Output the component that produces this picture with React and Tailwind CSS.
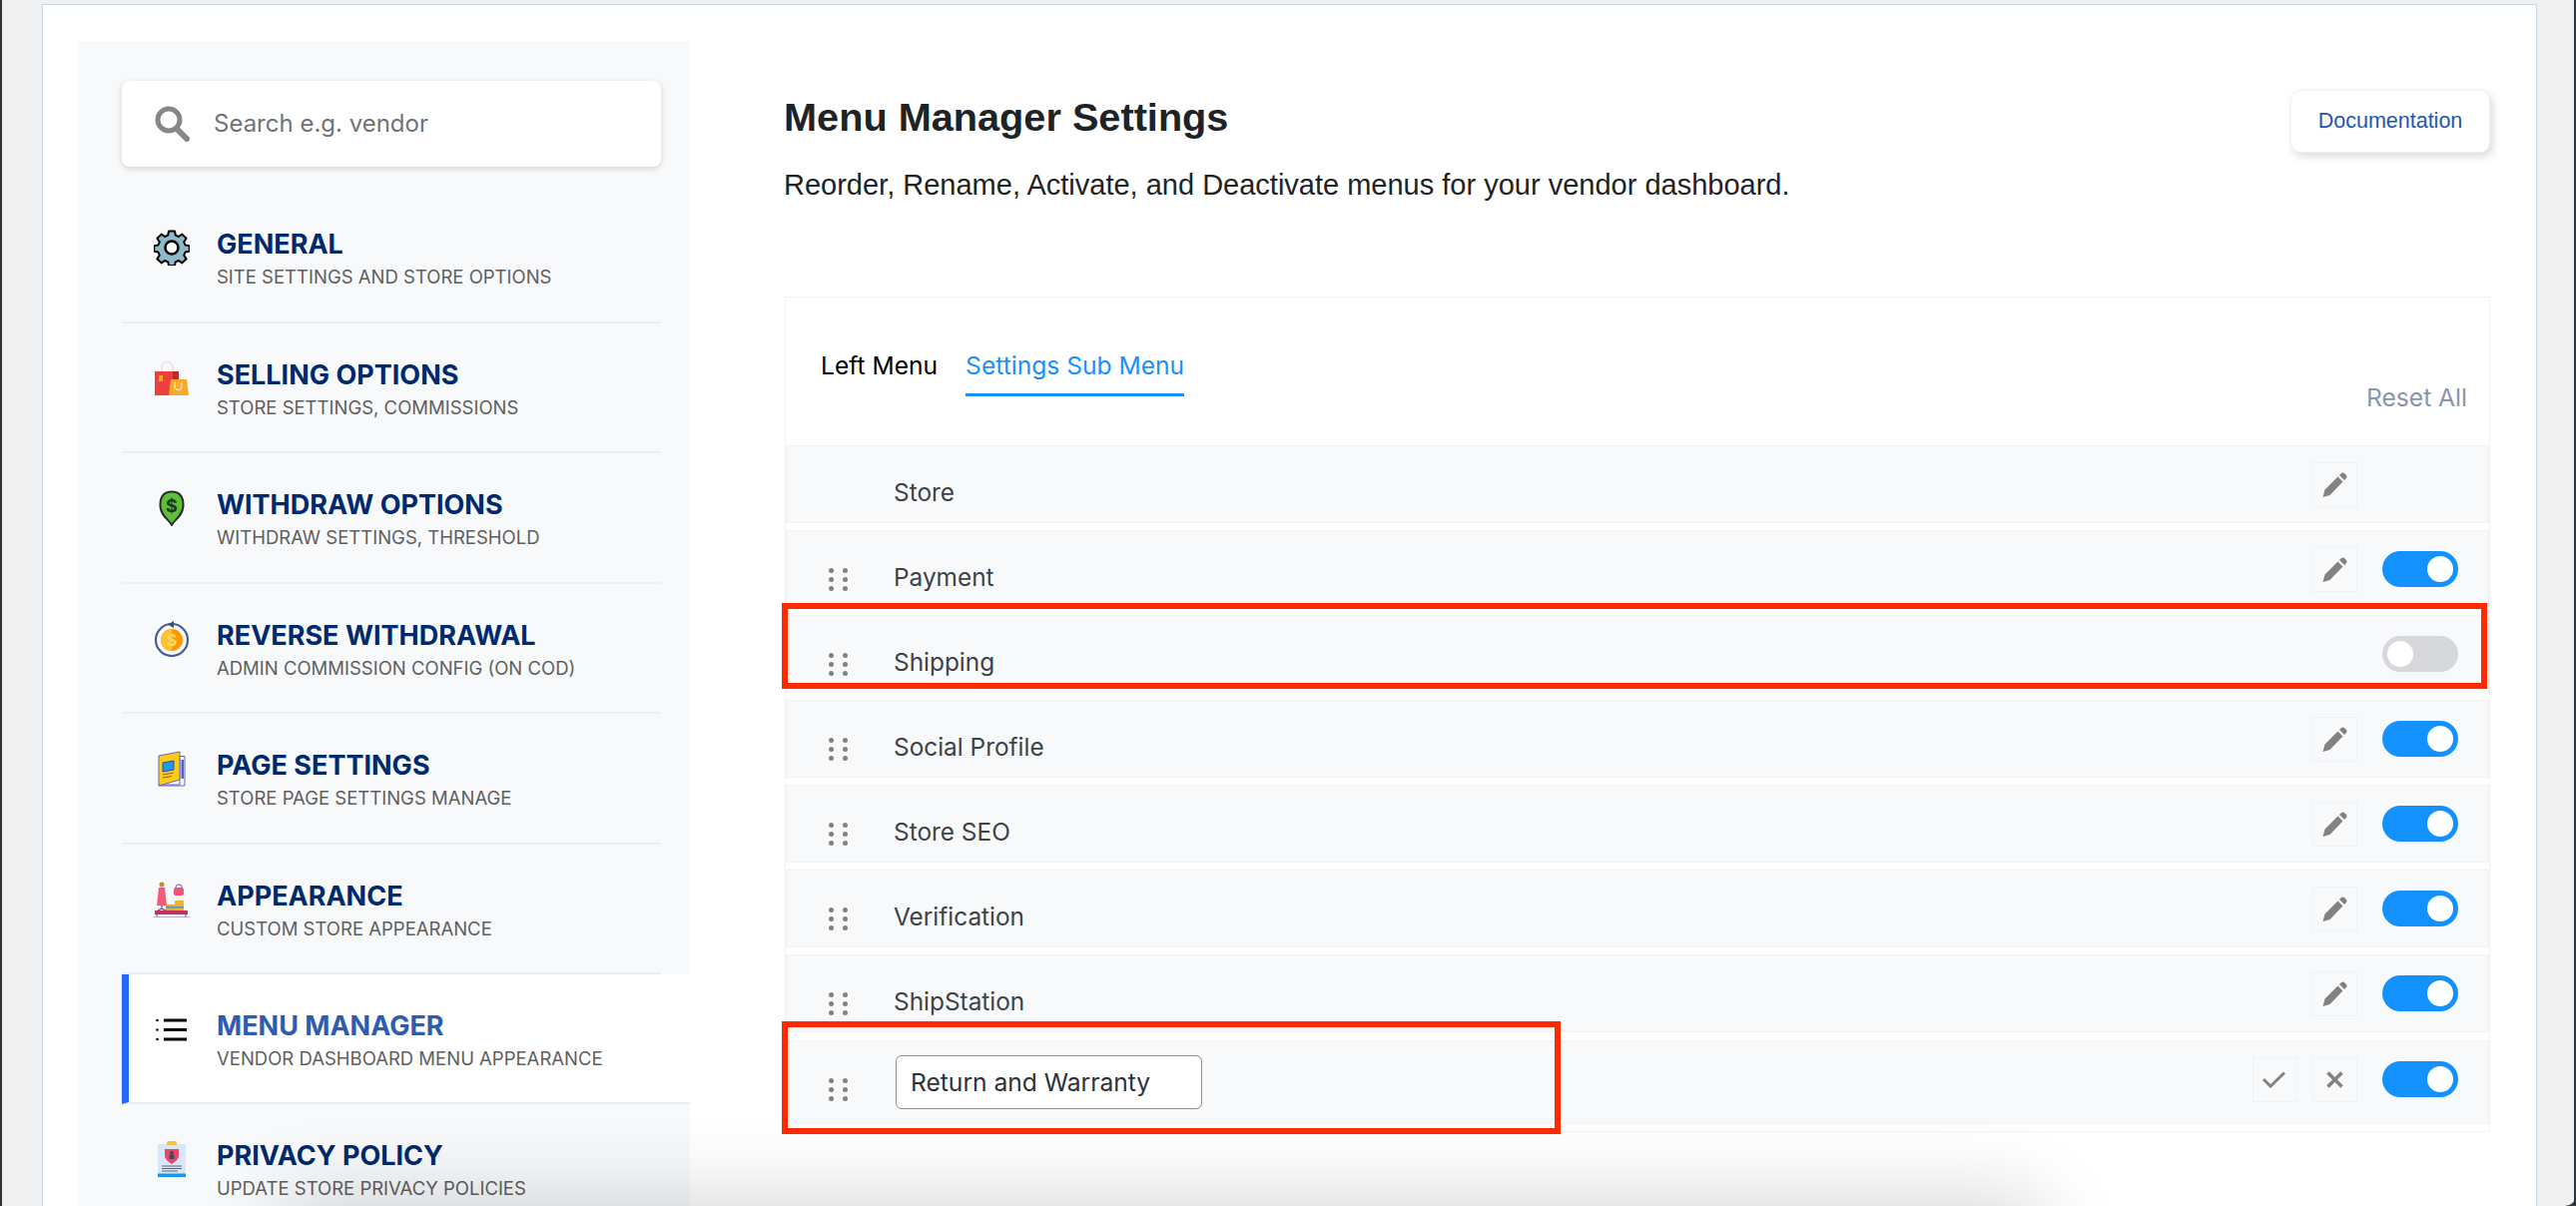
// ==========================================
// Sidebar icons
// ==========================================
const GearIcon = () => (
  <svg width="36" height="36" viewBox="0 0 36 36">
    <path
      d="M15 1.500h6l.8 4.200 3 1.300 3.600-2.400 4.200 4.200-2.400 3.600 1.300 3 4.200.8v5.600l-4.200.8-1.300 3 2.400 3.600-4.200 4.200-3.600-2.400-3 1.300-.8 3.600h-6l-.8-3.600-3-1.300-3.600 2.400-4.200-4.200 2.400-3.600-1.300-3-4.200-.8v-5.600l4.200-.8 1.300-3-2.400-3.600 4.200-4.200 3.600 2.400 3-1.300z"
      fill="#8fb8c8"
      stroke="#000"
      strokeWidth="2"
      strokeLinejoin="round"
    />
    <circle cx="18" cy="18" r="6.500" fill="#fff" stroke="#000" strokeWidth="2.500" />
  </svg>
);

const BagsIcon = () => (
  <svg width="36" height="36" viewBox="0 0 36 36">
    <path d="M8 14V7a5.500 5.500 0 0 1 11 0v7" fill="none" stroke="#e4e4e8" strokeWidth="1.500" />
    <rect x="1" y="11" width="24" height="24" fill="#ee3e3e" />
    <rect x="19" y="11" width="6" height="8" fill="#b92c2c" />
    <rect x="5" y="15" width="4" height="6" fill="#f3a626" />
    <path d="M17 19h16l2 16H15z" fill="#f7ab2b" />
    <path d="M21 22v4a3.500 3.500 0 0 0 7 0v-4" fill="none" stroke="#fbe3b4" strokeWidth="1.400" />
  </svg>
);

const CoinPinIcon = () => (
  <svg width="36" height="36" viewBox="0 0 36 36">
    <path
      d="M18 35c-2-5-11.500-9-11.500-20C6.500 6 11 1.500 18 1.500S29.500 6 29.500 15C29.500 26 20 30 18 35z"
      fill="#5cbf35"
      stroke="#2b2b2b"
      strokeWidth="2"
    />
    <text x="18" y="22" textAnchor="middle" fontSize="18" fontWeight="700" fill="#20331a" fontFamily="Inter, sans-serif">$</text>
  </svg>
);

const ReverseIcon = () => (
  <svg width="36" height="36" viewBox="0 0 36 36">
    <circle cx="18" cy="19" r="16" fill="none" stroke="#4b5c8f" strokeWidth="2.200" />
    <path d="M20 0v7l-6-3.500z" fill="#3d4d80" />
    <circle cx="18" cy="19" r="11" fill="#ff9800" />
    <path d="M18 8a11 11 0 0 0 0 22z" fill="#ffc02e" />
    <text x="18" y="25" textAnchor="middle" fontSize="16" fontWeight="700" fill="#ffd76a" fontFamily="Inter, sans-serif">$</text>
  </svg>
);

const PageIcon = () => (
  <svg width="36" height="36" viewBox="0 0 36 36">
    <path d="M26 5.500h5V35H5v-1h21z" fill="#fff" stroke="#5a63c8" strokeWidth="1" />
    <rect x="27.500" y="9" width="2.500" height="19" fill="#4a63d0" />
    <path d="M5 5L26 1v28L5 35z" fill="#ffcb14" stroke="#6a6ab0" strokeWidth="1" />
    <path d="M9 12l11-2v9l-11 2z" fill="#1a9cf0" stroke="#2a4ab0" strokeWidth="1" />
    <path d="M9 24l11-2M9 27l9-1.600" stroke="#7a6a40" strokeWidth="1" />
  </svg>
);

const AppearanceIcon = () => (
  <svg width="36" height="36" viewBox="0 0 36 36">
    <circle cx="8" cy="3" r="2.500" fill="#c98a3a" />
    <path d="M5 6h6l1 9 1 9H3l1-9z" fill="#f2597a" />
    <path d="M8 24v4M4 29l4-2 4 2" stroke="#5a4a8a" strokeWidth="1.200" fill="none" />
    <path d="M22 6a3 3 0 0 1 6 0" fill="none" stroke="#8a6a90" strokeWidth="1.200" />
    <rect x="20" y="6" width="10" height="8" rx="2" fill="#ec5578" />
    <rect x="12" y="23" width="9" height="6" fill="#e8a93a" />
    <rect x="21" y="19" width="9" height="10" fill="#f0b32e" />
    <rect x="12" y="25" width="18" height="1.500" fill="#4aa0a8" />
    <rect x="1" y="29" width="33" height="4" fill="#c2315f" />
    <path d="M3 33v2M32 33v2" stroke="#a05a90" strokeWidth="1.200" />
    <rect x="0" y="35" width="36" height="1" fill="#b7a6d2" />
  </svg>
);

const ListIcon = () => (
  <svg width="36" height="36" viewBox="0 0 36 36">
    <path d="M10 9h23M10 18.500h23M10 28h23" stroke="#000" strokeWidth="2.800" />
    <circle cx="3.500" cy="9" r="1.300" fill="#000" />
    <circle cx="3.500" cy="18.500" r="1.300" fill="#000" />
    <circle cx="3.500" cy="28" r="1.300" fill="#000" />
  </svg>
);

const PrivacyIcon = () => (
  <svg width="36" height="36" viewBox="0 0 36 36">
    <rect x="4" y="3" width="28" height="33" fill="#d9e6f5" />
    <rect x="4" y="32.500" width="28" height="3.500" fill="#1997ef" />
    <rect x="13" y="0" width="10" height="4" rx="1.500" fill="#f5c33b" />
    <path d="M11 8h14v7c0 3-4 6-7 8-3-2-7-5-7-8z" fill="#ef4468" />
    <circle cx="18" cy="12" r="2" fill="#3a4a6a" />
    <rect x="15.500" y="14" width="5" height="4" rx="1" fill="#3a4a6a" />
    <path d="M8 25h20M8 27.500h20M8 30h16" stroke="#5a6470" strokeWidth="1" />
  </svg>
);

const SearchIcon = () => (
  <svg width="36" height="36" viewBox="0 0 36 36">
    <circle cx="15" cy="14" r="11" fill="none" stroke="#85878a" strokeWidth="5" />
    <path d="M23 23l10 10" stroke="#85878a" strokeWidth="6" strokeLinecap="round" />
  </svg>
);

// ==========================================
// Row action icons
// ==========================================
const PencilIcon = () => (
  <svg width="25" height="25" viewBox="0 0 25 25" fill="#828282">
    <path d="M0.500 25L2.500 17.500 15.500 4.500 20.500 9.500 7.500 23z" />
    <path d="M17 3l1.500-1.500a2.800 2.800 0 0 1 4 0l1 1a2.800 2.800 0 0 1 0 4L22 8z" />
  </svg>
);

const CheckIcon = () => (
  <svg className="mr-[3px]" width="23" height="17" viewBox="0 0 23 17" fill="none" stroke="#828282" strokeWidth="3">
    <path d="M1 8l7 7L22 1.500" />
  </svg>
);

const CloseIcon = () => (
  <svg width="17" height="17" viewBox="0 0 17 17" fill="none" stroke="#828282" strokeWidth="3.500">
    <path d="M1.500 1.500l14 14M15.500 1.500l-14 14" />
  </svg>
);

const navItems = [
  { title: 'GENERAL', sub: 'SITE SETTINGS AND STORE OPTIONS', icon: GearIcon },
  { title: 'SELLING OPTIONS', sub: 'STORE SETTINGS, COMMISSIONS', icon: BagsIcon },
  { title: 'WITHDRAW OPTIONS', sub: 'WITHDRAW SETTINGS, THRESHOLD', icon: CoinPinIcon },
  { title: 'REVERSE WITHDRAWAL', sub: 'ADMIN COMMISSION CONFIG (ON COD)', icon: ReverseIcon },
  { title: 'PAGE SETTINGS', sub: 'STORE PAGE SETTINGS MANAGE', icon: PageIcon },
  { title: 'APPEARANCE', sub: 'CUSTOM STORE APPEARANCE', icon: AppearanceIcon },
  { title: 'MENU MANAGER', sub: 'VENDOR DASHBOARD MENU APPEARANCE', icon: ListIcon, active: true },
  { title: 'PRIVACY POLICY', sub: 'UPDATE STORE PRIVACY POLICIES', icon: PrivacyIcon },
];

const rows = [
  { name: 'Store', fixed: true, edit: true },
  { name: 'Payment', edit: true, on: true },
  { name: 'Shipping', on: false },
  { name: 'Social Profile', edit: true, on: true },
  { name: 'Store SEO', edit: true, on: true },
  { name: 'Verification', edit: true, on: true },
  { name: 'ShipStation', edit: true, on: true },
];

// ==========================================
// Small parts
// ==========================================
const Grip = () => (
  <div className="grid w-[19px] grid-cols-2 gap-x-[9px] gap-y-[4px]">
    {[0, 1, 2, 3, 4, 5].map((i) => (
      <span key={i} className="h-[5px] w-[5px] rounded-full bg-[#828282]" />
    ))}
  </div>
);

const Toggle = ({ on }) => (
  <div className={`flex h-[36px] w-[76px] items-center rounded-full px-[5px] ${on ? 'justify-end bg-[#1291ff]' : 'justify-start bg-[#d6d8db]'}`}>
    <span className="h-[26px] w-[26px] rounded-full bg-white" />
  </div>
);

const IconBox = ({ children }) => (
  <div className="flex h-[45px] w-[45px] items-center justify-center border border-[#f0f1f3]">
    {children}
  </div>
);

const NavItem = ({ item }) => {
  const Icon = item.icon;
  if (item.active) {
    return (
      <div className="flex h-[130px] w-[569px] gap-[27px] border-b-2 border-l-[7px] border-b-[#eceef0] border-l-[#2468f5] bg-white pl-[25px] pt-[35px]">
        <div className="mt-[2px]"><Icon /></div>
        <div>
          <div className="text-[27px] leading-[34px] font-bold text-[#2d5cb0]">{item.title}</div>
          <div className="mt-[3px] text-[18.5px] leading-[24px] text-[#5f5f5f]">{item.sub}</div>
        </div>
      </div>
    );
  }
  return (
    <div className="flex h-[130.5px] w-[540px] gap-[27px] border-b-2 border-[#eceef0] pl-[32px] pt-[35px]">
      <div className="mt-[2px]"><Icon /></div>
      <div>
        <div className="text-[27px] leading-[34px] font-bold text-[#002a6e]">{item.title}</div>
        <div className="mt-[3px] text-[18.5px] leading-[24px] text-[#5f5f5f]">{item.sub}</div>
      </div>
    </div>
  );
};

const MenuRow = ({ row }) => (
  <div className="flex h-[78px] items-center border border-[#f1f2f4] bg-[#f8f9fb] pl-[42px] pr-[30px]">
    <div className="mt-[20px] w-[65px]">{!row.fixed && <Grip />}</div>
    <div className="mt-[16px] flex-1 text-[24.4px] leading-[30px] text-[#3c434a]">{row.name}</div>
    <div className="flex items-center gap-[25px]">
      <div className="w-[45px]">
        {row.edit && <IconBox><PencilIcon /></IconBox>}
      </div>
      <div className="w-[76px]">{!row.fixed && <Toggle on={row.on} />}</div>
    </div>
  </div>
);

// ==========================================
// Page
// ==========================================
export default function App() {
  return (
    <div className="relative h-[1208px] w-[2580px] overflow-hidden border-x-2 border-[#2c3338] bg-[#f0f0f1] pl-[40px] pr-[37px] pt-[4px] font-['Inter',sans-serif]">
      {/* admin menu slivers on the far left */}
      <div className="absolute left-[-2px] top-[204px] h-[18px] w-[2px] bg-[#2271b1]" />
      <div className="absolute left-[-2px] top-[247px] h-[18px] w-[2px] bg-[#2271b1]" />

      <div className="flex h-[1300px] gap-[95px] border border-[#c8d7e1] bg-white pl-[36px] pr-[46px] pt-[36px]">
        {/* Sidebar */}
        <aside className="w-[612px] shrink-0 bg-[#f8f9fb] pl-[43px] pt-[40px]">
          <div className="flex h-[86px] w-[540px] items-center gap-[24px] rounded-[8px] bg-white pl-[32px] shadow-[0_2px_6px_rgba(0,0,0,0.16)]">
            <SearchIcon />
            <span className="text-[24px] text-[#6f7479]">Search e.g. vendor</span>
          </div>
          <div className="mt-[26px]">
            {navItems.map((item) => (
              <NavItem key={item.title} item={item} />
            ))}
          </div>
        </aside>

        {/* Main */}
        <main className="flex-1">
          <div className="flex items-start justify-between">
            <div className="-ml-[1px] pt-[52px] font-['Liberation_Sans',sans-serif] text-[#1d2327]">
              <h1 className="text-[39.7px] leading-[48px] font-bold">Menu Manager Settings</h1>
              <p className="mt-[27px] text-[29px] leading-[35px]">
                Reorder, Rename, Activate, and Deactivate menus for your vendor dashboard.
              </p>
            </div>
            <button className="mt-[49px] h-[63px] w-[200px] rounded-[10px] border border-[#f0f0f1] bg-white font-['Liberation_Sans',sans-serif] text-[21.5px] text-[#2456b4] shadow-[3px_4px_8px_rgba(0,0,0,0.14)]">
              Documentation
            </button>
          </div>

          <section className="mt-[94px] h-[837px] border border-[#f1f2f4]">
            <div className="relative flex h-[148px] gap-[28px] pl-[35px]">
              <div className="pt-[52px] text-[24.6px] leading-[32px] text-black">Left Menu</div>
              <div className="h-[99px] border-b-[3px] border-[#1890ff] pt-[52px] text-[24.6px] leading-[32px] text-[#1890ff]">Settings Sub Menu</div>
              <div className="absolute right-[22px] top-[84px] text-[24.6px] leading-[32px] text-[#8b94ad]">Reset All</div>
            </div>
            <div className="flex flex-col gap-[7px]">
              {rows.map((row) => (
                <MenuRow key={row.name} row={row} />
              ))}
              <div className="mt-[1px] flex h-[84px] items-center border border-[#f1f2f4] bg-[#f8f9fb] pl-[42px] pr-[30px]">
                <div className="mt-[14px] w-[67px]"><Grip /></div>
                <div className="flex-1">
                  <div className="flex h-[54px] w-[307px] items-center rounded-[6px] border border-[#8c8f94] bg-white pl-[14px] text-[24.6px] text-[#2c3338]">
                    Return and Warranty
                  </div>
                </div>
                <div className="mb-[6px] flex items-center gap-[15px]">
                  <IconBox><CheckIcon /></IconBox>
                  <div className="flex items-center gap-[25px]">
                    <IconBox><CloseIcon /></IconBox>
                    <Toggle on />
                  </div>
                </div>
              </div>
            </div>
          </section>
        </main>
      </div>

      {/* Annotation boxes drawn over the screenshot */}
      <div className="pointer-events-none absolute left-[781px] top-[604px] h-[86px] w-[1708px] border-[6px] border-[#ff2a00]" />
      <div className="pointer-events-none absolute left-[781px] top-[1023px] h-[113px] w-[780px] border-[6px] border-[#ff2a00]" />

      {/* soft shadow rising from the bottom edge */}
      <div className="pointer-events-none absolute left-[320px] top-[1245px] h-[30px] w-[1680px] rounded-full shadow-[0_0_80px_50px_rgba(0,0,0,0.15)]" />

      {/* rounded window corner */}
      <div className="absolute bottom-0 right-[-2px] h-[10px] w-[10px] bg-[radial-gradient(circle_at_0_0,transparent_9px,#3a3a3a_10px)]" />
    </div>
  );
}
